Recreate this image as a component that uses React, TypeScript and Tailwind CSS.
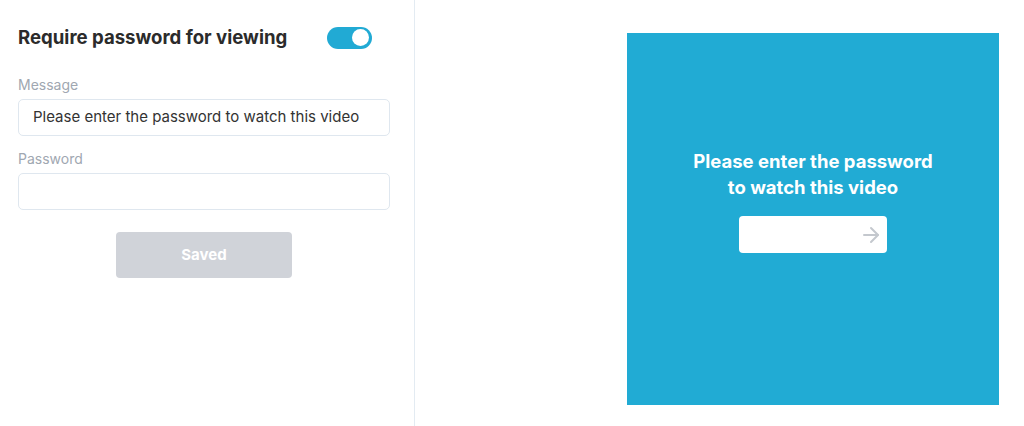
import { ArrowRight } from "lucide-react";

export default function App() {
  return (
    <div className="flex h-[426px] w-[1024px] bg-white font-['Inter',sans-serif]">
      {/* settings column */}
      <div className="w-[415px] shrink-0 border-r border-[#e3ebf2] pl-[18px] pr-[24px] pt-[24px]">
        <div className="flex items-center justify-between pr-[18px]">
          <h2 className="text-[18.6px] font-bold text-[#2b2b2b]">Require password for viewing</h2>
          <button className="flex h-[22px] w-[45px] items-center justify-end rounded-full bg-[#21aad4] px-[3px]">
            <span className="h-[17px] w-[17px] rounded-full bg-white" />
          </button>
        </div>

        <label className="mt-[22px] block text-[14px] text-[#a0a7b1]">Message</label>
        <div className="mt-[4px] flex h-[37px] items-center rounded-[5px] border border-[#dfe7ef] px-[14px] text-[15px] text-[#333]">
          Please enter the password to watch this video
        </div>

        <label className="mt-[12px] block text-[14px] text-[#a0a7b1]">Password</label>
        <div className="mt-[4px] h-[37px] rounded-[5px] border border-[#dfe7ef]" />

        <div className="mt-[22px] flex justify-center">
          <button className="h-[46px] w-[176px] rounded-[4px] bg-[#d0d3d9] text-[15px] font-bold text-white">Saved</button>
        </div>
      </div>

      {/* preview */}
      <div className="flex flex-1 justify-end pr-[25px] pt-[33px]">
        <div className="flex h-[372px] w-[372px] flex-col items-center bg-[#21abd4] pt-[115px]">
          <p className="text-center text-[18.5px] font-bold leading-[26px] text-white">
            Please enter the password
            <br />
            to watch this video
          </p>
          <div className="mt-[16px] flex h-[37px] w-[148px] items-center justify-end rounded-[4px] bg-white pr-[4px]">
            <ArrowRight className="h-[24px] w-[24px] text-[#c4c8ce]" strokeWidth={2} />
          </div>
        </div>
      </div>
    </div>
  );
}
